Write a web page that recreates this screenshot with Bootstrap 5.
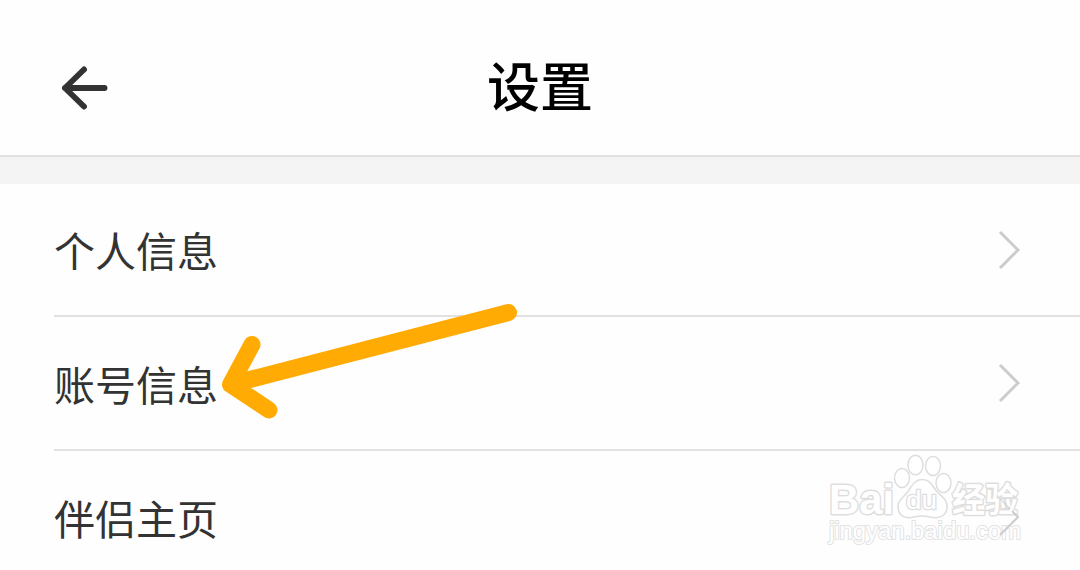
<!DOCTYPE html>
<html lang="zh-CN">
<head>
<meta charset="utf-8">
<meta name="viewport" content="width=device-width, initial-scale=1">
<title>设置</title>
<link href="https://cdn.jsdelivr.net/npm/bootstrap@5.3.0/dist/css/bootstrap.min.css" rel="stylesheet">
<style>
body{height:570px;background:#fefefe;font-family:"Noto Sans CJK SC",sans-serif;color:#333}
.topbar{height:157px;padding:20px 54px 0;border-bottom:2px solid #e1e1e1;display:grid;grid-template-columns:60px 1fr 60px}
.topbar h1{font-size:53px;font-weight:500;line-height:1;color:#000;padding-bottom:6px}
.band{height:27px;background:#f4f4f4}
.settings{padding-left:54px}
.setting{height:134px;padding:3px 58px 0 0;border-bottom:2px solid #e1e1e1;font-size:41px;line-height:1;color:#333}
.setting:first-child{height:133px}
.setting span{padding-bottom:3px}
.setting svg{margin-top:-4px}
.setting:last-child svg{z-index:2}
.pointer{left:210px;top:290px}
.watermark{left:810px;top:440px}
</style>
</head>
<body class="position-relative overflow-hidden">
<header class="topbar align-items-center">
  <svg width="60" height="50" viewBox="54 63 60 50" fill="none" stroke="#333" stroke-width="5.9" stroke-linecap="round" stroke-linejoin="round"><path d="M84 69.500 65 88l19 18.500M65 88h39.500"/></svg>
  <h1 class="m-0 text-center">设置</h1>
</header>
<div class="band"></div>
<main class="settings">
  <div class="setting d-flex align-items-center justify-content-between"><span>个人信息</span><svg width="24" height="42" fill="none" stroke="#ccc" stroke-width="3"><path d="m2 4 18 18L2 40"/></svg></div>
  <div class="setting d-flex align-items-center justify-content-between"><span>账号信息</span><svg width="24" height="42" fill="none" stroke="#ccc" stroke-width="3"><path d="m2 3 18 18L2 39"/></svg></div>
  <div class="setting d-flex align-items-center justify-content-between"><span>伴侣主页</span><svg class="position-relative" width="24" height="42" fill="none" stroke="#ccc" stroke-width="2"><path d="m2 3 10 10" stroke-opacity=".5"/><path d="m14 15 6 6L2 39"/></svg></div>
</main>
<svg class="pointer position-absolute" width="320" height="140" viewBox="210 290 320 140" fill="none" stroke="#ffab04" stroke-width="17" stroke-linecap="round" stroke-linejoin="round"><path d="M508.500 312.500 230.500 384.500M252 344.500 230.500 384.500 269 410"/></svg>
<svg class="watermark position-absolute" width="230" height="120" fill="#fff" stroke="#dedede" stroke-width="1.500">
  <g font-family="Liberation Sans, Noto Sans CJK SC, sans-serif" font-weight="700" paint-order="stroke" stroke-width="3" stroke-linejoin="round">
    <text x="19" y="74" font-size="43" textLength="65" lengthAdjust="spacingAndGlyphs">Bai</text>
    <text x="142" y="72" font-size="34" textLength="66" lengthAdjust="spacingAndGlyphs" font-family="Noto Sans CJK SC, sans-serif">经验</text>
  </g>
  <ellipse cx="92" cy="38" rx="7.500" ry="9.500"/><ellipse cx="105.500" cy="25" rx="7.500" ry="9.800"/><ellipse cx="123" cy="26" rx="7.500" ry="9.500"/><ellipse cx="133.500" cy="43" rx="7.500" ry="9.500"/>
  <path d="M112 39.500c8 0 10 6 14 11 5 6 11 8 11 16 0 9-7 12-14 11-7-2-15-2-22 0-8 1-13-3-13-11 0-7 6-9 10-15 4-6 7-12 14-12Z"/>
  <text x="96" y="69" font-family="Liberation Sans, sans-serif" font-size="26" textLength="31" lengthAdjust="spacingAndGlyphs" paint-order="stroke" stroke-width="2.500">du</text>
  <text x="19" y="99" font-family="Liberation Sans, sans-serif" font-size="23" textLength="192" lengthAdjust="spacingAndGlyphs" paint-order="stroke" stroke="#e3e3e3" stroke-width="2" stroke-linejoin="round">jingyan.baidu.com</text>
</svg>
<script src="https://cdn.jsdelivr.net/npm/bootstrap@5.3.0/dist/js/bootstrap.bundle.min.js"></script>
</body>
</html>
